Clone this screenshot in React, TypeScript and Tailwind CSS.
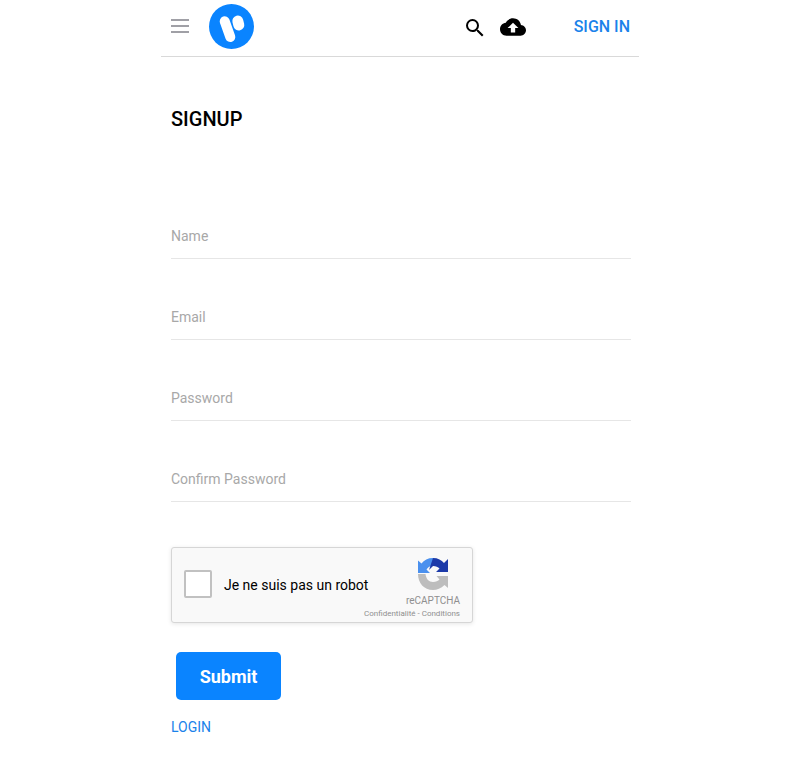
import React from "react";

function Field({ label }: { label: string }) {
  return (
    <div className="h-[81px] flex flex-col justify-end">
      <div className="h-[45px] w-[460px] border-b border-[#e6e6e6] pt-[12px] text-[14px] leading-[20px] text-[#a8a8a8]">
        {label}
      </div>
    </div>
  );
}

export default function App() {
  return (
    <div className="mx-auto h-[765px] w-[478px] bg-white font-['Roboto',sans-serif]">
      <header className="flex h-[57px] items-center border-b border-[#d9d9d9] pb-[3px] pl-[10px] pr-[9px]">
        <div className="flex w-[18px] flex-col gap-[4px] mt-[-2px]">
          <span className="h-[2px] bg-[#a0a0a6]" />
          <span className="h-[2px] bg-[#a0a0a6]" />
          <span className="h-[2px] bg-[#a0a0a6]" />
        </div>
        <svg className="ml-[20px]" width="45" height="45" viewBox="0 0 45 45">
          <circle cx="22.5" cy="22.5" r="22.5" fill="#0a84ff" />
          <line x1="15.7" y1="17.3" x2="21.3" y2="33" stroke="#fff" strokeWidth="10" strokeLinecap="round" />
          <line x1="28.8" y1="17" x2="29.8" y2="21" stroke="#fff" strokeWidth="11" strokeLinecap="round" />
        </svg>
        <svg className="ml-[209px] mt-[3px]" width="24" height="24" viewBox="0 0 24 24" fill="#000">
          <path d="M15.5 14h-.79l-.28-.27A6.47 6.47 0 0 0 16 9.5 6.5 6.5 0 1 0 9.5 16c1.61 0 3.09-.59 4.23-1.57l.27.28v.79l5 4.99L20.49 19l-4.99-5zm-6 0C7.01 14 5 11.99 5 9.5S7.01 5 9.5 5 14 7.01 14 9.5 11.99 14 9.5 14z" />
        </svg>
        <svg className="ml-[13px] mt-[1px]" width="26" height="26" viewBox="0 0 24 24" fill="#000">
          <path d="M19.35 10.04C18.67 6.59 15.64 4 12 4 9.11 4 6.6 5.64 5.35 8.04 2.34 8.36 0 10.91 0 14c0 3.31 2.69 6 6 6h13c2.76 0 5-2.24 5-5 0-2.64-2.05-4.78-4.65-4.96zM14 13v4h-4v-4H7l5-5 5 5h-3z" />
        </svg>
        <span className="ml-auto mt-[1px] text-[16px] font-medium leading-[20px] text-[#1a82ea]">SIGN IN</span>
      </header>

      <main className="pl-[10px]">
        <h1 className="mt-[50px] h-[24px] text-[20px] font-medium leading-[24px] text-black">SIGNUP</h1>
        <div className="mt-[47px]">
          <Field label="Name" />
          <Field label="Email" />
          <Field label="Password" />
          <Field label="Confirm Password" />
        </div>

        <div className="mt-[45px] flex h-[76px] w-[302px] rounded-[3px] border border-[#d6d6d6] bg-[#f9f9f9] shadow-[0_1px_4px_rgba(0,0,0,0.1)]">
          <span className="ml-[12px] mt-[22px] h-[28px] w-[28px] shrink-0 rounded-[2px] border-2 border-[#c1c1c1] bg-white" />
          <span className="ml-[12px] mt-[27px] w-[130px] shrink-0 whitespace-nowrap text-[14px] leading-[20px] text-black">Je ne suis pas un robot</span>
          <div className="ml-auto mr-[12px] flex flex-col items-end whitespace-nowrap">
            <svg className="mr-[12px] mt-[10px]" width="30" height="32" viewBox="0 0 30 32">
              <path d="M15 0 C10 0 6 2 3.5 5.5 L0 2.5 L0 15 L12 15 L8.5 11.5 C10 9 12 8 15 8 Z" fill="#4a90ee" />
              <path d="M15 0 C20 0 23.5 2 26 5 L30 1 L30 14 L18 14 L21.5 10.5 C20 9 18 8 15 8 L11 12 Z" fill="#1c3aa9" />
              <path d="M0 16 L7.5 16 C8 21 11 24 15 24 C18 24 20 23 21.5 21.5 L18.5 18 L30 18 L30 30 L26.5 27 C23 30.5 19 32 15 32 C6 32 0 25 0 16 Z" fill="#bdbdbd" />
            </svg>
            <span className="mt-[5px] text-[10px] leading-[12px] text-[#8f8f8f]">reCAPTCHA</span>
            <span className="mt-[2px] text-[8px] leading-[10px] text-[#8f8f8f]">Confidentialité - Conditions</span>
          </div>
        </div>

        <button className="ml-[5px] mt-[29px] block h-[48px] w-[105px] rounded-[5px] bg-[#0a84ff] text-[18px] font-bold text-white">Submit</button>
        <a className="mt-[17px] block text-[14px] leading-[20px] text-[#1a82ea]">LOGIN</a>
      </main>
    </div>
  );
}
